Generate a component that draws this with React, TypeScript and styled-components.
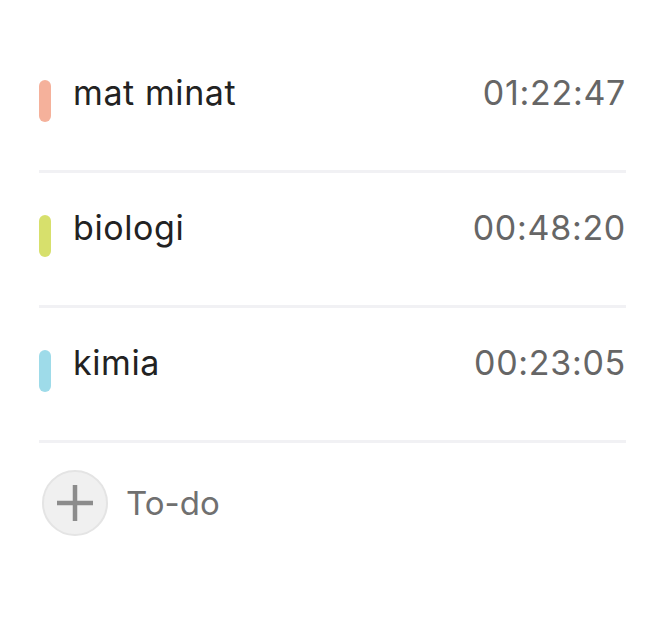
import styled, { createGlobalStyle } from "styled-components";

const GlobalStyle = createGlobalStyle`
  html, body {
    margin: 0;
    padding: 0;
    background: #fff;
  }
  body {
    font-family: Inter, "Noto Sans", sans-serif;
    -webkit-font-smoothing: antialiased;
  }
`;

const Page = styled.div`
  width: 650px;
  padding: 38px 24px 0 39px;
  box-sizing: border-box;
`;

const List = styled.ul`
  list-style: none;
  margin: 0;
  padding: 0;
`;

const Row = styled.li`
  display: flex;
  align-items: center;
  height: 135px;
  padding-bottom: 23px;
  box-sizing: border-box;
  border-bottom: 3px solid #f1f1f4;
`;

const Tag = styled.span<{ $color: string }>`
  width: 12px;
  height: 42px;
  margin-top: 17px;
  border-radius: 6px;
  background: ${({ $color }) => $color};
  flex-shrink: 0;
`;

const Title = styled.span`
  flex: 1;
  margin-left: 22px;
  font-size: 34px;
  color: #222;
  letter-spacing: 0.6px;
`;

const Time = styled.span`
  font-size: 34px;
  color: #666;
  letter-spacing: 0.7px;
`;

const AddRow = styled.button`
  display: flex;
  align-items: center;
  gap: 18px;
  border: 0;
  background: none;
  padding: 27px 0 0 3px;
  font: inherit;
  cursor: pointer;
`;

const PlusCircle = styled.span`
  width: 66px;
  height: 66px;
  border-radius: 50%;
  background: #f0f0f0;
  border: 2px solid #e4e4e4;
  box-sizing: border-box;
  display: flex;
  align-items: center;
  justify-content: center;
`;

const AddLabel = styled.span`
  font-size: 33px;
  color: #707070;
`;

const subjects = [
  { name: "mat minat", time: "01:22:47", color: "#f5b19b" },
  { name: "biologi", time: "00:48:20", color: "#d7e06c" },
  { name: "kimia", time: "00:23:05", color: "#9edbe9" },
];

export default function App() {
  return (
    <Page>
      <GlobalStyle />
      <List>
        {subjects.map((s) => (
          <Row key={s.name}>
            <Tag $color={s.color} />
            <Title>{s.name}</Title>
            <Time>{s.time}</Time>
          </Row>
        ))}
      </List>
      <AddRow>
        <PlusCircle>
          <svg width="38" height="38" viewBox="0 0 38 38">
            <path d="M19 1v36M1 19h36" stroke="#8c8c8c" strokeWidth="4.5" />
          </svg>
        </PlusCircle>
        <AddLabel>To-do</AddLabel>
      </AddRow>
    </Page>
  );
}
